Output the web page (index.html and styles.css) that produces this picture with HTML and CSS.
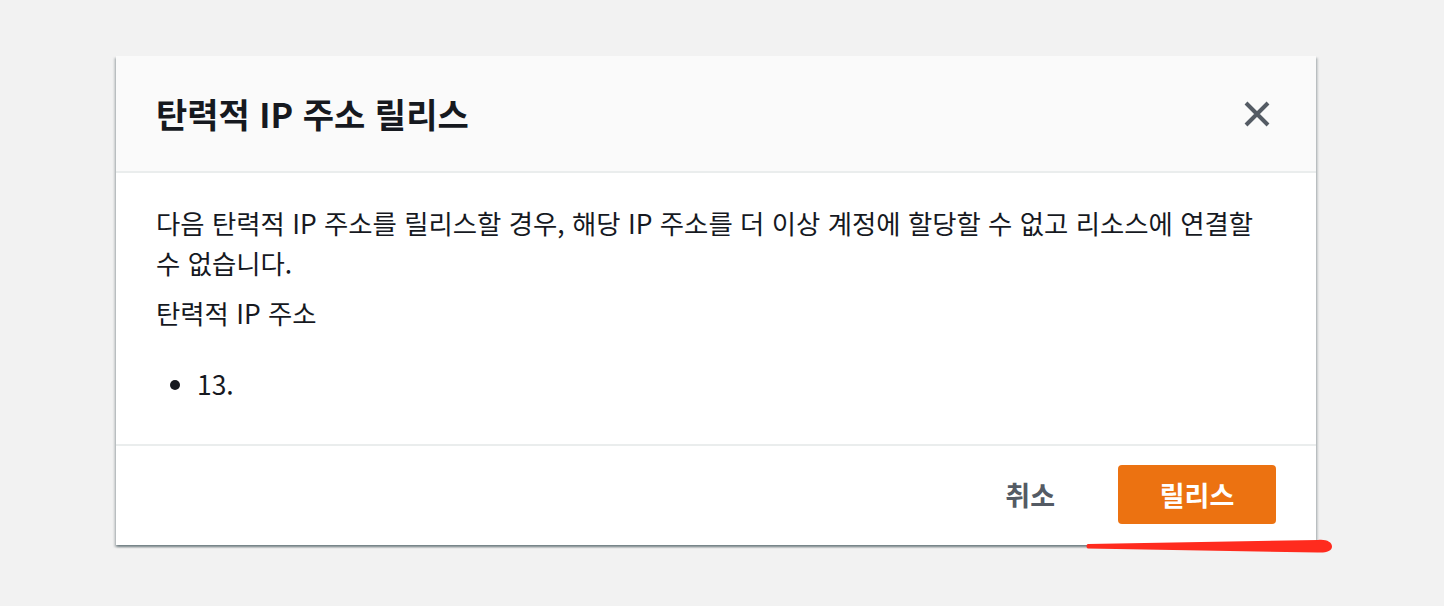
FILE: index.html
```html
<!DOCTYPE html>
<html lang="ko">
<head>
<meta charset="utf-8">
<title>탄력적 IP 주소 릴리스</title>
<link rel="stylesheet" href="styles.css">
</head>
<body>
<div class="stage">
  <div class="modal">
    <div class="modal-header">
      <h2 class="modal-title">탄력적 IP 주소 릴리스</h2>
      <button class="close-btn" aria-label="닫기">
        <svg width="28" height="28" viewBox="0 0 28 28"><path d="M3 3 L25 25 M25 3 L3 25" stroke="#545b64" stroke-width="4" fill="none"/></svg>
      </button>
    </div>
    <div class="modal-body">
      <p class="desc">다음 탄력적 IP 주소를 릴리스할 경우, 해당 IP 주소를 더 이상 계정에 할당할 수 없고 리소스에 연결할 수 없습니다.</p>
      <p class="label">탄력적 IP 주소</p>
      <ul class="ip-list">
        <li>13.</li>
      </ul>
    </div>
    <div class="modal-footer">
      <button class="btn-link">취소</button>
      <button class="btn-primary">릴리스</button>
    </div>
    <svg class="annotation" width="248" height="18" viewBox="0 0 248 18"><path d="M2 7 L232 3 C240 2 246 5 246 9.5 C246 14 240 16 232 15.5 L2 11.5 C0 11.5 0 7 2 7 Z" fill="#ff2b1e"/></svg>
  </div>
</div>
</body>
</html>
```

FILE: styles.css
```css
html, body {
  margin: 0;
  padding: 0;
  background: #f2f2f2;
}
body {
  font-family: "Noto Sans CJK KR", "Noto Sans", sans-serif;
  color: #16191f;
  min-height: 606px;
}
.stage {
  padding: 56px 0 60px 116px;
}
.modal {
  position: relative;
  width: 1200px;
  background: #fff;
  box-shadow: 0 2px 2px 0 rgba(0, 28, 36, 0.35), 2px 2px 2px 0 rgba(0, 28, 36, 0.15), -2px 2px 2px 0 rgba(0, 28, 36, 0.15);
}
.modal-header {
  height: 117px;
  background: #fafafa;
  border-bottom: 2px solid #eaeded;
  display: flex;
  align-items: center;
  justify-content: space-between;
  padding: 0 40px 0 40px;
  box-sizing: border-box;
}
.modal-title {
  margin: 0;
  font-size: 34px;
  font-weight: 700;
  line-height: 40px;
  color: #16191f;
}
.close-btn {
  border: 0;
  background: transparent;
  padding: 0;
  margin-right: 5px;
  width: 28px;
  height: 28px;
  display: flex;
  cursor: pointer;
}
.modal-body {
  padding: 30px 40px 30px 40px;
  font-size: 26.4px;
  line-height: 40px;
  color: #16191f;
  word-break: keep-all;
}
.desc {
  margin: 0 0 10px 0;
}
.label {
  margin: 0;
}
.ip-list {
  margin: 31px 0 10px 0;
  padding: 0 0 0 41px;
}
.modal-footer {
  border-top: 2px solid #eaeded;
  padding: 19px 40px 21px 40px;
  display: flex;
  justify-content: flex-end;
  align-items: center;
}
.btn-link {
  border: 0;
  background: transparent;
  font-family: inherit;
  font-size: 27px;
  font-weight: 700;
  color: #545b64;
  padding: 0 30px;
  margin-right: 33px;
  height: 59px;
}
.btn-primary {
  border: 0;
  background: #ec7211;
  color: #fff;
  font-family: inherit;
  font-size: 27px;
  font-weight: 700;
  width: 158px;
  height: 59px;
  border-radius: 4px;
}
.annotation {
  position: absolute;
  left: 970px;
  bottom: -10px;
}
```
